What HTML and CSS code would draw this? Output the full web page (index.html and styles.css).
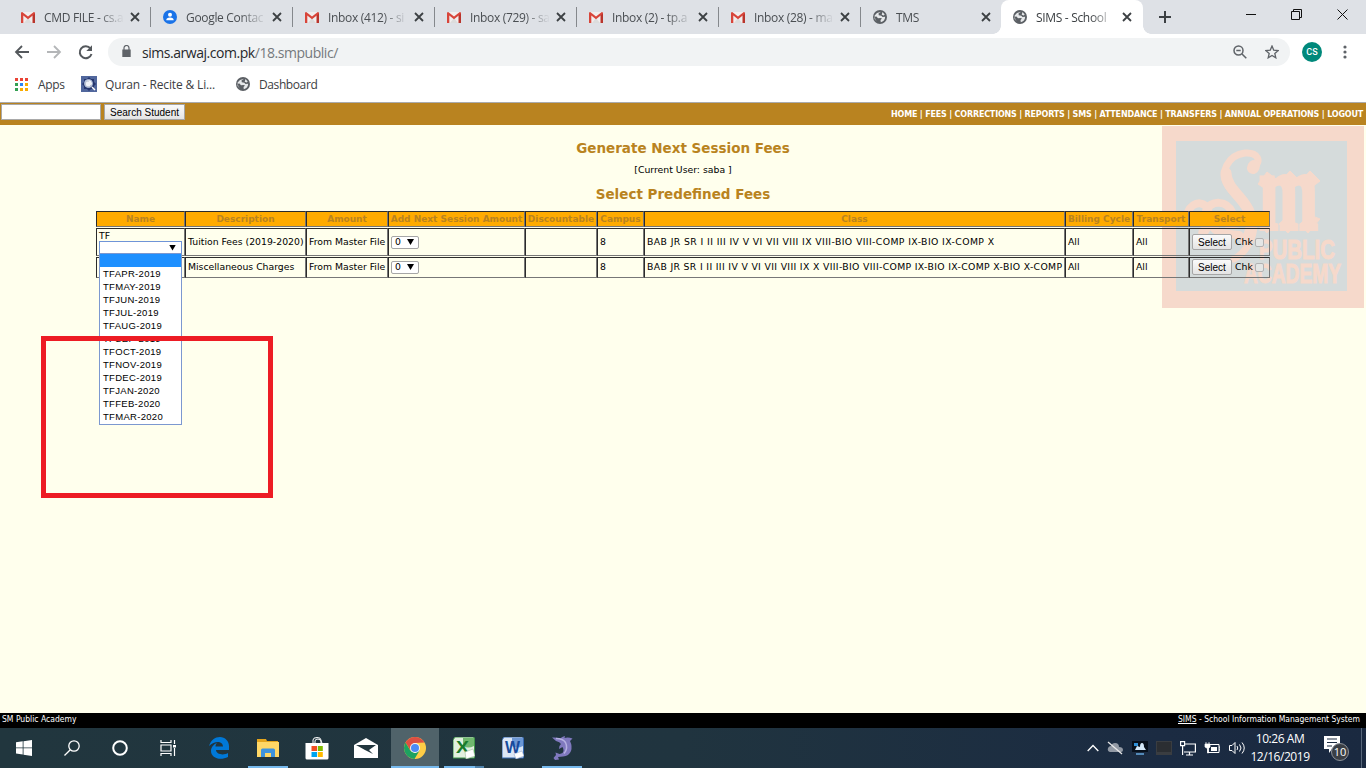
FILE: index.html
```html
<!DOCTYPE html>
<html lang="en">
<head>
<meta charset="utf-8">
<title>SIMS - School Information Management System</title>
<link rel="stylesheet" href="styles.css">
</head>
<body>
<svg class="defs" width="0" height="0">
  <symbol id="gmail" viewBox="0 0 14 11"><path d="M1 0h12v11H1z" fill="#f1eeee"/><path d="M3 11l4-5 4 5z" fill="#dcdcdc"/><path d="M0 1.2Q0 0 1.2 0L7 4.6 12.800 0Q14 0 14 1.200V11h-2.300V3.600L7 7.300 2.300 3.600V11H0z" fill="#d8453a"/><path d="M11.700 3.600L14 1.500V11h-2.300z" fill="#b8352c"/></symbol>
  <symbol id="globe" viewBox="0 0 14 14"><circle cx="7" cy="7" r="7" fill="#5b5f64"/><path d="M8 1.700L5.500 3.600l.3 1.600 2.500.5L9.500 7l2.700-.3c0 3-2 5-4.400 5.500L7.500 10 9 8.600 7.500 8 5 8.200 3.500 6.500 1.700 6.800 2.500 9.700 4 11.700 1.600 9V5.500L4 3z" fill="#e6e8ea"/><path d="M9.500 2l2.200 2.600-1 .8-2-.6z" fill="#e6e8ea"/></symbol>
  <symbol id="close" viewBox="0 0 10 10"><path d="M1 1l8 8M9 1L1 9" stroke="#3c4043" stroke-width="1.800"/></symbol>
</svg>

<header class="tabs">
  <div class="tab"><svg class="fav mail"><use href="#gmail"/></svg><span class="title">CMD FILE - cs.a</span><svg class="x"><use href="#close"/></svg></div>
  <div class="tab"><svg class="fav" viewBox="0 0 14 14"><circle cx="7" cy="7" r="7" fill="#1a73e8"/><circle cx="7" cy="4.700" r="2" fill="#fff"/><path d="M3.300 10.300Q3.300 7.500 7 7.500t3.700 2.800z" fill="#fff"/></svg><span class="title">Google Contac</span><svg class="x"><use href="#close"/></svg></div>
  <div class="tab"><svg class="fav mail"><use href="#gmail"/></svg><span class="title">Inbox (412) - si</span><svg class="x"><use href="#close"/></svg></div>
  <div class="tab"><svg class="fav mail"><use href="#gmail"/></svg><span class="title">Inbox (729) - sa</span><svg class="x"><use href="#close"/></svg></div>
  <div class="tab"><svg class="fav mail"><use href="#gmail"/></svg><span class="title">Inbox (2) - tp.a</span><svg class="x"><use href="#close"/></svg></div>
  <div class="tab"><svg class="fav mail"><use href="#gmail"/></svg><span class="title">Inbox (28) - ma</span><svg class="x"><use href="#close"/></svg></div>
  <div class="tab last"><svg class="fav"><use href="#globe"/></svg><span class="title">TMS</span><svg class="x"><use href="#close"/></svg></div>
  <div class="tab active"><svg class="fav"><use href="#globe"/></svg><span class="title">SIMS - School</span><svg class="x"><use href="#close"/></svg></div>
  <svg class="newtab" viewBox="0 0 12 12"><path d="M6 0v12M0 6h12" stroke="#3c4043" stroke-width="2"/></svg>
  <div class="winctl">
    <svg width="10" height="11"><path d="M0 5.500h10" stroke="#111"/></svg>
    <svg width="11" height="11"><path d="M.5 2.500h8v8h-8zM2.500 2.500v-2h8v8h-2" fill="none" stroke="#111"/></svg>
    <svg width="11" height="11"><path d="M.5.5l10 10M10.500.5l-10 10" stroke="#111"/></svg>
  </div>
</header>

<div class="toolbar">
  <svg class="nav" width="80" height="16" viewBox="0 0 80 16"><path d="M15 8H2M8 2L2 8l6 6" fill="none" stroke="#54585c" stroke-width="1.800"/><path d="M33 8h13M40 2l6 6-6 6" fill="none" stroke="#b4b6b8" stroke-width="1.800"/><path d="M76.500 4.500A6 6 0 1 0 77.500 10" fill="none" stroke="#54585c" stroke-width="2"/><path d="M78 1.300V7h-5.700z" fill="#54585c"/></svg>
  <div class="omnibox">
    <svg class="lock" width="9" height="12" viewBox="0 0 9 12"><path d="M.3 4.500h8.400V12H.3z" fill="#5f6368"/><path d="M2 5V3a2.500 2.500 0 0 1 5 0v2" fill="none" stroke="#5f6368" stroke-width="1.200"/></svg>
    <span class="url">sims.arwaj.com.pk<i>/18.smpublic/</i></span>
    <svg width="14" height="14" viewBox="0 0 14 14" fill="none" stroke="#5f6368" stroke-width="1.500"><circle cx="5.500" cy="5.500" r="4.500"/><path d="M9 9l4.300 4.300M3.300 5.500h4.400"/></svg>
    <svg class="star" width="14" height="14" viewBox="0 0 14 14"><path d="M7 1l1.700 4.100 4.500.4-3.400 2.900 1 4.400L7 10.500l-3.800 2.300 1-4.400L.8 5.500l4.500-.4z" fill="none" stroke="#5f6368" stroke-width="1.300"/></svg>
  </div>
  <span class="avatar">CS</span>
  <svg class="dots" width="4" height="14"><g fill="#5f6368"><circle cx="2" cy="2" r="1.600"/><circle cx="2" cy="7" r="1.600"/><circle cx="2" cy="12" r="1.600"/></g></svg>
</div>

<div class="bookmarks">
  <svg width="13" height="13"><path d="M0 0h3v3H0zM5 0h3v3H5zM10 0h3v3h-3z" fill="#ea4335"/><path d="M0 5h3v3H0zM0 10h3v3H0z" fill="#34a053"/><path d="M5 5h3v3H5z" fill="#2a84f4"/><path d="M10 5h3v3h-3zM5 10h3v3H5zM10 10h3v3h-3z" fill="#f9ab00"/></svg>
  <span class="b-apps">Apps</span>
  <svg width="16" height="16"><path d="M0 0h16v16H0z" fill="#51679d"/><path d="M8 1l2 2h3v3l2 2-2 2v3h-3l-2 2-2-2H3v-3L1 8l2-2V3h3z" fill="#26376f"/><circle cx="7.500" cy="7.500" r="4" fill="#f0f2f7" stroke="#9fb0d2"/><path d="M8 5a3 3 0 1 0 2 4" stroke="#b5bfcf" fill="none"/><path d="M11 11l3 3" stroke="#fff" stroke-width="1.500"/></svg>
  <span class="b-quran">Quran - Recite &amp; Li...</span>
  <svg class="fav"><use href="#globe"/></svg>
  <span class="b-dash">Dashboard</span>
</div>

<nav class="site">
  <input class="q" type="text" aria-label="Student"><button class="search">Search Student</button>
  <span class="menu">HOME | FEES | CORRECTIONS | REPORTS | SMS | ATTENDANCE | TRANSFERS | ANNUAL OPERATIONS | LOGOUT</span>
</nav>

<main>
  <svg class="logo" width="202" height="182" viewBox="0 0 202 182">
    <path d="M0 0h202v182H0z" fill="#f6d9cb"/><path d="M14 15h171v150H14z" fill="#d5dbdb"/>
    <g fill="none" stroke="#f6d9cb" stroke-linecap="round">
      <path d="M91 42C101 35 95 26 83 27C66 29 57 47 66 60C75 74 92 82 92 98C92 114 83 127 72 133" stroke-width="7"/>
      <path d="M64 47C64 63 84 73 88 88C91 98 88 108 84 114" stroke-width="11"/>
      <path d="M91 42l1-2" stroke-width="12"/>
      <path d="M26 86C31 74 46 74 47 89C49 104 37 111 41 105M44 85C50 73 65 75 70 86M47 94C52 110 65 107 77 109" stroke-width="8"/>
      <path d="M58 92C65 104 72 99 84 96" stroke-width="6"/>
    </g>
    <g fill="#f6d9cb" stroke="#f6d9cb">
      <path d="M96 58l9-12 9 7-9 11zM117 57l11-12 8 8-11 11zM137 57l11-12 10 10-12 9zM96 98l9-8 8 8-8 9zM117 98l9-8 8 8-8 9zM138 98l10-9 10 4-12 14z"/>
      <text class="m" x="97" y="103" textLength="59" lengthAdjust="spacingAndGlyphs" stroke-width="4">m</text>
      <text class="word" x="97" y="133" textLength="76" lengthAdjust="spacingAndGlyphs" stroke-width="1">PUBLIC</text>
      <text class="word" x="82" y="157" textLength="97" lengthAdjust="spacingAndGlyphs" stroke-width="1">ACADEMY</text>
    </g>
  </svg>

  <h1>Generate Next Session Fees</h1>
  <p class="user">[Current User: saba ]</p>
  <h2>Select Predefined Fees</h2>

  <table class="fees">
    <colgroup><col class="c1"><col class="c2"><col class="c3"><col class="c4"><col class="c5"><col class="c6"><col class="c7"><col class="c8"><col class="c9"><col class="c10"></colgroup>
    <tr class="head"><th>Name</th><th>Description</th><th>Amount</th><th>Add Next Session Amount</th><th>Discountable</th><th>Campus</th><th>Class</th><th>Billing Cycle</th><th>Transport</th><th>Select</th></tr>
    <tr class="r1">
      <td class="name">TF
        <div class="combo"><i class="arrow"></i>
          <ul class="list"><li class="on"></li><li>TFAPR-2019</li><li>TFMAY-2019</li><li>TFJUN-2019</li><li>TFJUL-2019</li><li>TFAUG-2019</li><li>TFSEP-2019</li><li>TFOCT-2019</li><li>TFNOV-2019</li><li>TFDEC-2019</li><li>TFJAN-2020</li><li>TFFEB-2020</li><li>TFMAR-2020</li></ul>
        </div>
      </td>
      <td>Tuition Fees (2019-2020)</td><td>From Master File</td><td><span class="sel">0<i class="arrow"></i></span></td><td></td><td>8</td>
      <td class="cls">BAB JR SR I II III IV V VI VII VIII IX VIII-BIO VIII-COMP IX-BIO IX-COMP X</td><td>All</td><td>All</td>
      <td><div class="act"><button>Select</button>Chk<b></b></div></td>
    </tr>
    <tr class="r2">
      <td></td><td>Miscellaneous Charges</td><td>From Master File</td><td><span class="sel">0<i class="arrow"></i></span></td><td></td><td>8</td>
      <td class="cls">BAB JR SR I II III IV V VI VII VIII IX X VIII-BIO VIII-COMP IX-BIO IX-COMP X-BIO X-COMP</td><td>All</td><td>All</td>
      <td><div class="act"><button>Select</button>Chk<b></b></div></td>
    </tr>
  </table>
</main>

<footer class="foot"><span>SM Public Academy</span><span><u>SIMS</u> - School Information Management System</span></footer>

<div class="taskbar">
  <div class="cell"><svg width="16" height="16"><path d="M0 2.300L6.700 1.300V7.500H0zM7.500 1.200L16 0v7.500H7.500zM0 8.300h6.700v6.200L0 13.600zM7.500 8.300H16V16l-8.500-1.200z" fill="#fff"/></svg></div>
  <div class="cell"><svg width="16" height="16" fill="none" stroke="#fff" stroke-width="1.300"><circle cx="10" cy="6" r="5.200"/><path d="M6.300 9.700L.5 15.500"/></svg></div>
  <div class="cell"><svg width="16" height="16"><circle cx="8" cy="8" r="6.800" fill="none" stroke="#fff" stroke-width="2"/></svg></div>
  <div class="cell gap"><svg width="17" height="16" fill="none" stroke="#fff" stroke-width="1.200"><path d="M1 0v2.500h10V0M1 16v-2.500h10V16M1 5h10v6H1zM14.500 0v4M14.500 8v8"/><path d="M13 5h3v2.500h-3z" fill="#fff" stroke="none"/></svg></div>
  <div class="cell app"><svg width="20" height="22" viewBox="0 0 20 22"><path d="M0 9C2 3 6 0 11 0c5 0 9 4 9 9v4H7c0 4 7 6 12 3v4C11 24 2 21 2 14c0-4 3-7 6-8-1 1-1.500 2-1.500 3.500H14C14 4 6 3 0 9z" fill="#0078d7"/></svg></div>
  <div class="cell app run w40"><svg width="22" height="18"><path d="M0 0h9l1 2h11v16H0z" fill="#e5a51c"/><path d="M0 3h22v15H0z" fill="#ffd766"/><path d="M4 18v-7q0-1.500 1.500-1.500h11Q18 9.500 18 11v7h-4v-4H8v4z" fill="#3e93dd"/></svg></div>
  <div class="cell app"><svg width="24" height="24" viewBox="0 0 24 24"><path d="M8 7V4q0-2.500 4-2.500T16 4v3M10 7V5q0-2 3-2t4 4" fill="none" stroke="#fff"/><path d="M.5 7h23v15q0 1.500-1.500 1.500H2Q.5 23.500.5 22z" fill="#fff"/><path d="M6.500 10H12v5H6.500z" fill="#f04e23"/><path d="M12.800 10h5v5h-5z" fill="#7fba00"/><path d="M6.500 16H12v5H6.500z" fill="#00a4ef"/><path d="M12.800 16h5v5h-5z" fill="#ffb900"/></svg></div>
  <div class="cell app"><svg width="24" height="20"><path d="M0 7L12 0l12 7v13H0z" fill="#fff"/><path d="M2 7h20l-7 5 4 4-8-4z" fill="#22363e"/></svg></div>
  <div class="cell app run current"><svg width="22" height="22" viewBox="0 0 22 22"><circle cx="11" cy="11" r="11" fill="#ffcd46"/><path d="M1.500 5.500A11 11 0 0 1 20.500 5.500L11 6 6.500 13.500z" fill="#dd4f43"/><path d="M1.500 5.500A11 11 0 0 0 10.500 22l5.200-8.700L11 16l-4.700-2.500z" fill="#1da261"/><circle cx="11" cy="11" r="5" fill="#f5f5f5"/><circle cx="11" cy="11" r="4" fill="#4c8bf5"/></svg></div>
  <div class="cell app run xl"><svg width="22" height="22"><path d="M2 0h18q1.500 0 1.500 2v19H0V3z" fill="#e2f0df" stroke="#3f9648"/><path d="M10 1h11v8q-6 3-11 0z" fill="#70b86e"/><text class="off" x="3" y="16" textLength="13" lengthAdjust="spacingAndGlyphs" fill="#197b2c">X</text><path d="M12 15l8-3 2 7-9 3z" fill="#fff" stroke="#9dbf9d" stroke-width=".6"/></svg></div>
  <div class="cell app"><svg width="22" height="22"><path d="M2 0h18q1.500 0 1.500 2v19H0V3z" fill="#dce7f6" stroke="#3568b0"/><path d="M10 1h11v8q-6 3-11 0z" fill="#6c97d5"/><text class="off" x="3" y="16" textLength="15" lengthAdjust="spacingAndGlyphs" fill="#164b9c">W</text><path d="M12 17l8-3 2 5-8 3z" fill="#fff" stroke="#9aacce" stroke-width=".6"/></svg></div>
  <div class="cell app run w40"><svg width="22" height="24" viewBox="0 0 22 24"><path d="M1 1.500Q5 1 9 2.500 12 0 14 0l-.5 2Q17 1 21.500 2.500L19 5q2.500 5 1 10-2 5-8 5.500L7 21l1 2.500-4 .5-1.500-2L5 19l-.5-2.500 4 1.500q4-.5 4-3.500 0-2-1-3.500L8 13q-.5-3 2-5Q9 6 5 5z" fill="#8079bf"/><path d="M5 2.500q7 0 9.500 4 3 6-1.500 11" stroke="#b6b1e2" fill="none" stroke-width="1.500"/></svg></div>
  <div class="tray">
    <svg width="12" height="8"><path d="M.7 7L6 1.500 11.300 7" fill="none" stroke="#fff" stroke-width="1.300"/></svg>
    <svg width="16" height="14"><path d="M3 11q-3-1-2-4 1-2 3-2 1-3 4-3 4 0 4 4 4 0 4 3 0 2-2 2z" fill="#9299a4"/><path d="M1 1l14 12" stroke="#e8e8e8" stroke-width="1.300"/></svg>
    <svg width="16" height="14"><path d="M0 0h16v11H0z" fill="#07101c"/><path d="M2 2h4v3H2z" fill="#2f90d8"/><path d="M8 6q0-4 2-4t2 4l2 3H3l2-4z" fill="#d5e9f9"/><path d="M4 13h8" stroke="#5289b8" stroke-width="2"/></svg>
    <svg width="16" height="14"><path d="M0 0h16v14H0z" fill="#3a3d41"/><path d="M1 1h14v10H1z" fill="#2b2e32"/></svg>
    <svg width="16" height="15" fill="none" stroke="#fff" stroke-width="1.200"><path d="M4 3h11.400v8H4M9.500 11v3M6 14h7M.6.6h4v4h-4zM2.600 5v9"/></svg>
    <svg width="16" height="12"><path d="M4 2.500h11v8H4zM15 5h1v3h-1" fill="none" stroke="#fff"/><path d="M7 5h6v4H7z" fill="#fff"/><path d="M1 2h5v3L4.500 6.500V11h-1V6.500L1 5zM2 0v2M5 0v2" fill="#fff" stroke="#fff" stroke-width=".7"/></svg>
    <svg width="17" height="14" fill="none" stroke="#fff"><path d="M.5 4.500h2.500L6 1.500v11l-3-3H.5zM8 5q1.500 2 0 4M10.500 3.500q3 3.500 0 7M13 1.500q4.500 5.500 0 11"/></svg>
  </div>
  <div class="clock"><span>10:26 AM</span><span>12/16/2019</span></div>
  <svg class="notes" width="26" height="26"><path d="M0 1h16v13H8l-3 4v-4H0z" fill="#fff"/><path d="M3 4h10M3 7.500h10M3 11h5" stroke="#1b2b40" stroke-width="1.200"/><circle cx="16" cy="17" r="8.500" fill="#3b3f45" stroke="#8d9299"/><text x="16" y="21" text-anchor="middle" fill="#fff">10</text></svg>
  <div class="peek"></div>
</div>

<div class="marker"></div>
</body>
</html>
```
FILE: styles.css
```css
* { box-sizing: border-box; }
body { margin: 0; width: 1366px; height: 768px; overflow: hidden; display: flex; flex-direction: column; position: relative; font-family: "DejaVu Sans", sans-serif; font-size: 9.300px; color: #000; background: #ffffed; }
svg { flex: none; display: block; }
.defs { position: absolute; }
i { font-style: normal; }

/* browser tabs */
.tabs { height: 34px; flex: none; background: #dee1e6; display: flex; align-items: center; padding-left: 9px; font: 12px "Open Sans", sans-serif; color: #4a4e52; }
.tab { width: 142px; height: 34px; display: flex; align-items: center; padding-left: 12px; position: relative; }
.tab::after { content: ""; position: absolute; right: 0; top: 7px; width: 1px; height: 20px; background: #85888c; }
.tab.last::after, .tab.active::after { display: none; }
.tab.last { width: 140px; }
.tab.active { background: #fff; border-radius: 8px 8px 0 0; color: #3c4043; }
.tab.active::before { content: ""; position: absolute; left: -8px; right: -8px; bottom: 0; height: 8px; background: radial-gradient(circle at 0 0, transparent 7.500px, #fff 8px) left / 8px 8px no-repeat, radial-gradient(circle at 100% 0, transparent 7.500px, #fff 8px) right / 8px 8px no-repeat; }
.fav { width: 14px; height: 14px; }
.fav.mail { height: 11px; margin-top: 1px; }
.title { width: 80px; margin-left: 9px; white-space: nowrap; letter-spacing: -.32px; mask-image: linear-gradient(90deg, #000 68%, transparent 100%); }
.x { width: 10px; height: 10px; margin-left: 6px; }
.last .x { margin-left: 5px; }
.newtab { width: 12px; height: 12px; margin-left: 16px; }
.winctl { display: flex; gap: 35px; margin: -6px 0 0 75px; }

.toolbar { height: 36px; flex: none; background: #fff; display: flex; align-items: center; padding-left: 14px; }
.omnibox { margin-left: 14px; width: 1182px; height: 28px; border-radius: 14px; background: #f1f3f4; display: flex; align-items: center; padding: 0 11px 0 14px; }
.lock { margin-top: -2px; }
.url { flex: 1; margin-left: 11px; font: 14px "Open Sans", sans-serif; letter-spacing: -.46px; color: #26282b; }
.url i { color: #75797d; }
.star { margin-left: 18px; }
.avatar { width: 20px; height: 20px; border-radius: 50%; background: #00897b; color: #fff; font: 500 9px/20px Roboto, sans-serif; text-align: center; margin-left: 12px; }
.dots { margin-left: 21px; }

.bookmarks { height: 33px; flex: none; background: #fff; border-bottom: 1px solid #aaabad; display: flex; align-items: center; padding: 0 0 4px 15px; font: 12px "Open Sans", sans-serif; color: #3c4043; }
.b-apps { width: 43px; margin-left: 10px; letter-spacing: -.3px; }
.b-quran { width: 131px; margin-left: 8px; letter-spacing: -.15px; }
.b-dash { margin-left: 9px; letter-spacing: -.4px; }

/* application */
.site { height: 22px; flex: none; background: #b98320; display: flex; align-items: center; padding: 0 3px 4px 1px; }
.q { width: 100px; height: 16px; border: 1px solid #a9a9a9; padding: 0; background: #fff; }
button { font: 10px "Liberation Sans", sans-serif; color: #000; background: linear-gradient(#fafafa, #e4e4e4); border: 1px solid #a6a6a6; padding: 0; }
.search { width: 81px; height: 16px; margin-left: 3px; }
.menu { margin: 4px 0 0 auto; color: #fff; font-weight: bold; font-size: 8px; letter-spacing: -.18px; white-space: nowrap; }
main { flex: 1; position: relative; }
.logo { position: absolute; left: 1162px; top: 1px; }
.logo .m { font: bold 112px "Liberation Serif", serif; }
.logo .word { font: bold 27px "Liberation Sans", sans-serif; }
h1, h2 { margin: 0; font-size: 13.500px; line-height: 20px; text-align: center; color: #b98320; position: relative; }
h1 { padding-top: 13px; }
.user { margin: 4px 0 5px; line-height: 16px; text-align: center; position: relative; }
h2 { line-height: 20px; padding-top: 1px; }

.fees { table-layout: fixed; width: 1174px; margin: 6px 0 0 96px; border-spacing: 0 1px; position: relative; }
.c1 { width: 89px; } .c2 { width: 121px; } .c3 { width: 82px; } .c4 { width: 137px; } .c5 { width: 72px; }
.c6 { width: 47px; } .c7 { width: 421px; } .c8 { width: 68px; } .c9 { width: 56px; } .c10 { width: 81px; }
.fees th, .fees td { padding: 0 0 0 2px; border: 1px solid; border-color: #2b2b2b #777 #777 #2b2b2b; white-space: nowrap; line-height: 12px; }
.fees th { height: 16px; padding: 0; background: #ffab00; color: #b98320; font-size: 9px; }
.r1 td { height: 28px; }
.r2 td { height: 21px; }
.r2 td { padding-bottom: 1px; }
.r1 .cls { letter-spacing: .4px; }
.r2 .cls { letter-spacing: .34px; }
.fees .name { vertical-align: top; padding: 1px 0 0 2px; line-height: 11px; }
.combo { width: 83px; height: 13px; border: 1px solid #6f94d8; background: #fff; position: relative; display: flex; align-items: center; justify-content: flex-end; padding-right: 5px; }
.arrow { width: 7px; height: 6px; background: #000; clip-path: polygon(0 0, 100% 0, 50% 100%); }
.list { position: absolute; z-index: 2; left: -1px; top: 11px; width: 83px; height: 172px; margin: 0; padding: 0; list-style: none; background: #fff; border: 1px solid #7c98d0; font: 9.500px/13px "Liberation Sans", sans-serif; text-align: left; }
.list li { height: 13px; padding-left: 3px; letter-spacing: .3px; }
.list .on { background: #1e90ff; }
.sel { display: flex; width: 28px; height: 13px; border: 1px solid #a6a6a6; border-radius: 2px; background: #fff; align-items: center; justify-content: space-between; padding: 0 4px 0 3px; }
.act { display: flex; align-items: center; }
.act button { width: 40px; height: 16px; border-radius: 2px; margin-right: 3px; }
.act b { width: 9px; height: 9px; border: 1px solid #b2b2b2; border-radius: 2px; background: #e4e6e5; margin-left: 2px; }

.foot { height: 15px; flex: none; background: #000; color: #fff; display: flex; justify-content: space-between; padding: 0 6px 0 2px; font: 8.500px/13px "DejaVu Sans Condensed", "DejaVu Sans", sans-serif; }

/* desktop taskbar */
.taskbar { height: 40px; flex: none; background: linear-gradient(90deg, #21363e 0, #20343f 50%, #1b2b42 85%, #1a2940); display: flex; align-items: center; position: relative; color: #fff; }
.cell { width: 48px; height: 40px; display: flex; align-items: center; justify-content: center; position: relative; }
.gap { margin-right: 3px; }
.app { margin-right: 1px; }
.run::after { content: ""; position: absolute; left: 0; right: 0; bottom: 0; height: 2px; background: #76b9ed; }
.run.w40::after { left: 4px; right: 4px; }
.current { background: #50636a; }
.run.xl::after { left: 4px; right: 4px; background: linear-gradient(90deg, #76b9ed 31px, #4f82aa 31px); }
.off { font: bold 17px "Liberation Sans", sans-serif; }
.tray { display: flex; align-items: center; gap: 8.300px; position: absolute; left: 1087px; top: 12px; height: 16px; }
.clock { margin-left: auto; width: 60px; display: flex; flex-direction: column; align-items: center; font: 12px/18px "Open Sans", sans-serif; letter-spacing: -.45px; white-space: nowrap; }
.notes { margin: 0 11px 0 14px; font: 11px "Open Sans", sans-serif; }
.peek { width: 1px; height: 40px; margin-right: 4px; background: #58677a; }

.marker { position: absolute; z-index: 5; left: 41px; top: 336px; width: 232px; height: 162px; border: 5px solid #ed1c24; }
```
